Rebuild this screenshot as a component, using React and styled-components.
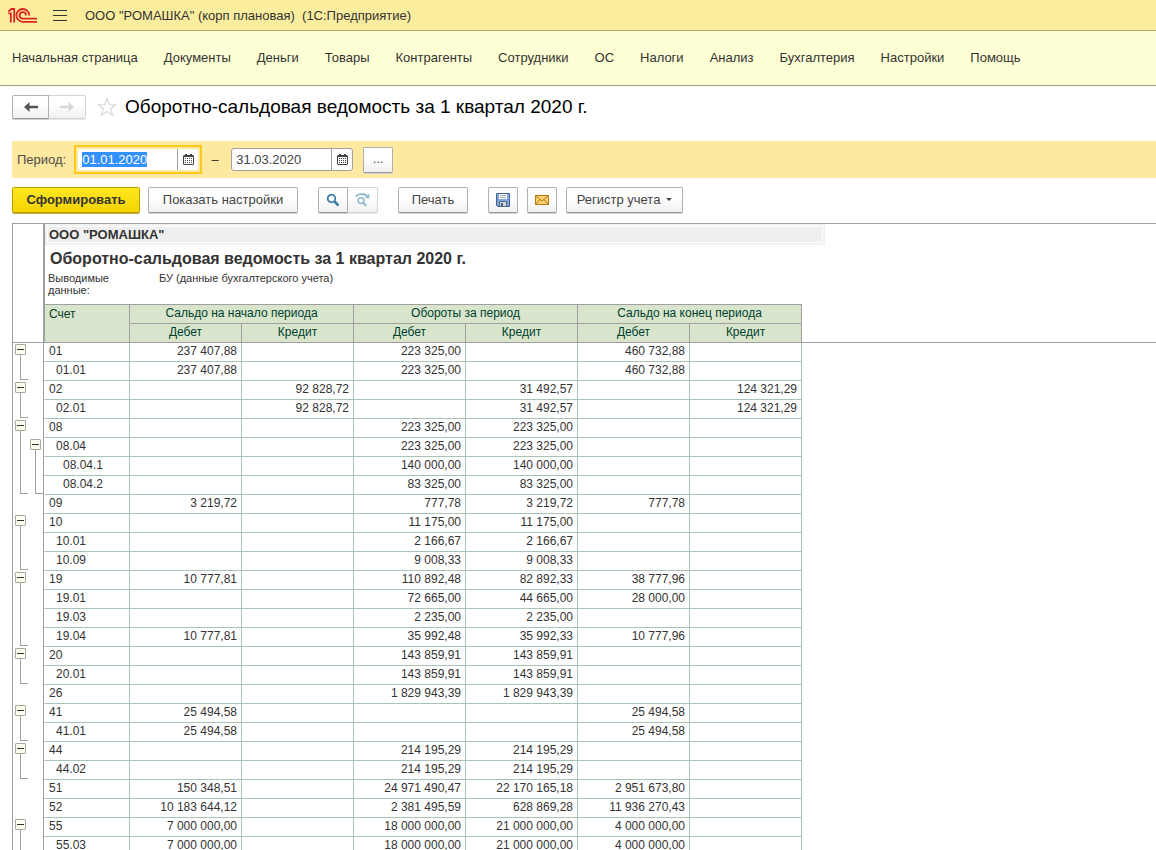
import React, { useEffect, useRef, useState } from 'react';
import styled, { createGlobalStyle, css } from 'styled-components';

const GlobalStyle = createGlobalStyle`
  * {
    box-sizing: border-box;
  }

  body {
    margin: 0;
    background: #ffffff;
    color: #333333;
    font-family: 'Liberation Sans', Arial, sans-serif;
    font-size: 13px;
  }

  button,
  input {
    font: inherit;
    color: inherit;
  }

  svg {
    flex: none;
  }
`;

const Page = styled.div`
  display: flex;
  flex-direction: column;
  height: 100vh;
  overflow: hidden;
`;

const TitleBar = styled.header`
  display: flex;
  flex: none;
  align-items: center;
  height: 31px;
  padding-left: 8px;
  background: #fbed9e;
  border-bottom: 1px solid #b3a86b;
`;

const MenuButton = styled.button`
  display: flex;
  margin: 0 18px 0 16px;
  padding: 0;
  border: none;
  background: none;
`;

const NavBar = styled.nav`
  display: flex;
  flex: none;
  align-items: center;
  gap: 26px;
  height: 55px;
  padding: 0 0 2px 12px;
  background: #ffffd5;
  border-bottom: 1px solid #a0a080;
`;

const NavLink = styled.a`
  color: #333333;
  text-decoration: none;
  white-space: nowrap;
`;

const FormHeader = styled.div`
  display: flex;
  flex: none;
  align-items: center;
  height: 42px;
  padding-left: 12px;
`;

const FormTitle = styled.h1`
  margin: 0 0 0 8px;
  color: #000000;
  font-size: 19px;
  font-weight: normal;
`;

const Button = styled.button`
  display: flex;
  align-items: center;
  justify-content: center;
  gap: 6px;
  width: ${props => props.$width || 30}px;
  height: 26px;
  padding: 0 0 2px;
  border: 1px solid #b0b0b0;
  border-bottom-color: #9a9a9a;
  border-radius: 2px;
  background: linear-gradient(#ffffff 40%, #f0f0f0);
  box-shadow: 0 1px 0 #d0d0d0;
  color: #444444;
  white-space: nowrap;

  ${props => props.$primary && css`
    border-color: #b8a000;
    background: linear-gradient(#ffe720, #f5d400);
    box-shadow: 0 1px 0 #c0b050;
    color: #333333;
    font-weight: bold;
  `}

  ${props => props.$icon && css`
    padding: 0;
  `}
`;

const ButtonPair = styled.div`
  display: flex;

  button:first-child {
    border-radius: 2px 0 0 2px;
  }

  button:last-child {
    border-left: none;
    border-color: #d4d4d4;
    border-radius: 0 2px 2px 0;
    box-shadow: 0 1px 0 #e4e4e4;
  }
`;

const HistoryButtons = styled(ButtonPair)`
  margin-right: 11px;

  button {
    height: 24px;
  }
`;

const StarButton = styled.button`
  display: flex;
  padding: 0;
  border: none;
  background: none;
`;

const PeriodBar = styled.div`
  display: flex;
  flex: none;
  align-items: center;
  height: 37px;
  margin: 13px 0 9px 12px;
  padding-left: 5px;
  background: #fde9a0;
`;

const PeriodLabel = styled.label`
  margin-right: 8px;
  color: #4d4d4d;
`;

const FocusFrame = styled.div`
  padding: 1px;
  border: 2px solid ${props => (props.$active ? '#fcc81c' : 'transparent')};
`;

const DateBox = styled.div`
  display: flex;
  width: 122px;
  height: 23px;
  border: 1px solid ${props => (props.$active ? '#fde9a0' : '#a0a0a0')};
  border-radius: 3px;
  background: #ffffff;
`;

const DateInput = styled.input`
  flex: 1;
  min-width: 0;
  padding: 0 0 0 4px;
  border: none;
  outline: none;
  background: transparent;
  color: #444444;

  &::selection {
    background: #3390ff;
    color: #ffffff;
  }
`;

const CalendarButton = styled.button`
  display: flex;
  align-items: center;
  justify-content: center;
  width: 21px;
  padding: 0;
  border: none;
  border-left: 1px solid #a0a0a0;
  background: none;
`;

const Dash = styled.span`
  width: 26px;
  text-align: center;
`;

const PeriodChoice = styled.div`
  margin-left: 7px;
`;

const Toolbar = styled.div`
  display: flex;
  flex: none;
  gap: 20px;
  height: 36px;
  padding-left: 12px;
`;

const ToolGroup = styled.div`
  display: flex;
  gap: ${props => props.$gap || 8}px;
`;

const Report = styled.section`
  flex: 1;
  min-height: 0;
  margin-left: 12px;
  border-top: 1px solid #a0a0a0;
  border-left: 1px solid #a0a0a0;
  overflow: auto;
  scrollbar-width: none;
`;

const ReportHead = styled.div`
  display: flex;
  height: 80px;
`;

const HeadGutter = styled.div`
  flex: none;
  width: 32px;
  border-right: 2px solid #a0a0a0;
`;

const HeadContent = styled.div`
  flex: 1;
`;

const Company = styled.div`
  width: 780px;
  height: 21px;
  border: 2px solid #f2f2f2;
  border-left: none;
  outline: 1px solid #ffffff;
  outline-offset: -3px;
  background: #efefef;
  padding-left: 4px;
  font-weight: bold;
  line-height: 17px;
`;

const ReportTitle = styled.h2`
  height: 27px;
  margin: 0;
  padding-left: 5px;
  font-size: 16px;
  line-height: 28px;
`;

const OutputData = styled.div`
  display: flex;
  padding-left: 3px;
  font-size: 11px;
  line-height: 12px;

  span:first-child {
    width: 111px;
    padding-right: 30px;
  }
`;

const Table = styled.table`
  width: 100%;
  table-layout: fixed;
  border-collapse: separate;
  border-spacing: 0;
  font-size: 12px;
`;

const HeadCell = styled.th`
  height: 19px;
  padding: 0 0 2px;
  border-right: 1px solid #a0a0a0;
  border-bottom: 1px solid #a0a0a0;
  background: #d8e5cc;
  color: #003f2f;
  font-weight: normal;
  line-height: 16px;

  ${props => props.$top && css`
    height: 20px;
    border-top: 1px solid #a0a0a0;
  `}

  ${props => props.$account && css`
    padding: 1px 0 0 4px;
    border-left: 1px solid #a0a0a0;
    text-align: left;
    vertical-align: top;
  `}
`;

const BlankHead = styled.td`
  padding: 0;
  border-bottom: 1px solid #a0a0a0;
  border-right: ${props => (props.$gutter ? '1px solid #a0a0a0' : 'none')};
`;

const GutterCell = styled.td`
  height: 19px;
  padding: 0;
  border-right: 1px solid #a0a0a0;
`;

const Slots = styled.div`
  display: flex;
  height: 19px;
`;

const Slot = styled.div`
  display: flex;
  flex-direction: column;
  width: 15px;
  height: 19px;
  padding: 1px 0 0 2px;

  ${props => props.$kind === 'line' && css`
    padding: 0 0 0 7px;
  `}
`;

const Toggle = styled.button`
  display: flex;
  align-items: center;
  justify-content: center;
  flex: none;
  width: 11px;
  height: 11px;
  padding: 0;
  border: 1px solid #a8a8a0;
  border-radius: 1px;
  background: #fffff0;

  &::before {
    content: '';
    width: 7px;
    height: 1px;
    background: #333333;
  }

  &[aria-expanded='false']::after {
    content: '';
    width: 1px;
    height: 7px;
    margin-left: -4px;
    background: #333333;
  }
`;

const Branch = styled.span`
  flex: 1;
  width: 8px;
  margin-left: ${props => (props.$below ? 5 : 0)}px;
  border-left: 1px solid #a0a0a0;

  ${props => props.$end && css`
    flex: none;
    height: 18px;
    border-bottom: 1px solid #a0a0a0;
  `}
`;

const AccountCell = styled.td`
  padding: 0 0 2px ${props => 4 + props.$level * 7}px;
  border-left: 1px solid #ffffff;
  border-right: 1px solid #a8c4b8;
  border-bottom: 1px solid #a8c4b8;
  line-height: 16px;
`;

const SumCell = styled.td`
  padding: 0 4px 2px 0;
  border-right: 1px solid #a8c4b8;
  border-bottom: 1px solid #a8c4b8;
  line-height: 16px;
  text-align: right;
`;

const navItems = [
  'Начальная страница',
  'Документы',
  'Деньги',
  'Товары',
  'Контрагенты',
  'Сотрудники',
  'ОС',
  'Налоги',
  'Анализ',
  'Бухгалтерия',
  'Настройки',
  'Помощь',
];

const groups = ['Сальдо на начало периода', 'Обороты за период', 'Сальдо на конец периода'];

const accounts = [
  ['01', 0, '237 407,88', '', '223 325,00', '', '460 732,88', ''],
  ['01.01', 1, '237 407,88', '', '223 325,00', '', '460 732,88', ''],
  ['02', 0, '', '92 828,72', '', '31 492,57', '', '124 321,29'],
  ['02.01', 1, '', '92 828,72', '', '31 492,57', '', '124 321,29'],
  ['08', 0, '', '', '223 325,00', '223 325,00', '', ''],
  ['08.04', 1, '', '', '223 325,00', '223 325,00', '', ''],
  ['08.04.1', 2, '', '', '140 000,00', '140 000,00', '', ''],
  ['08.04.2', 2, '', '', '83 325,00', '83 325,00', '', ''],
  ['09', 0, '3 219,72', '', '777,78', '3 219,72', '777,78', ''],
  ['10', 0, '', '', '11 175,00', '11 175,00', '', ''],
  ['10.01', 1, '', '', '2 166,67', '2 166,67', '', ''],
  ['10.09', 1, '', '', '9 008,33', '9 008,33', '', ''],
  ['19', 0, '10 777,81', '', '110 892,48', '82 892,33', '38 777,96', ''],
  ['19.01', 1, '', '', '72 665,00', '44 665,00', '28 000,00', ''],
  ['19.03', 1, '', '', '2 235,00', '2 235,00', '', ''],
  ['19.04', 1, '10 777,81', '', '35 992,48', '35 992,33', '10 777,96', ''],
  ['20', 0, '', '', '143 859,91', '143 859,91', '', ''],
  ['20.01', 1, '', '', '143 859,91', '143 859,91', '', ''],
  ['26', 0, '', '', '1 829 943,39', '1 829 943,39', '', ''],
  ['41', 0, '25 494,58', '', '', '', '25 494,58', ''],
  ['41.01', 1, '25 494,58', '', '', '', '25 494,58', ''],
  ['44', 0, '', '', '214 195,29', '214 195,29', '', ''],
  ['44.02', 1, '', '', '214 195,29', '214 195,29', '', ''],
  ['51', 0, '150 348,51', '', '24 971 490,47', '22 170 165,18', '2 951 673,80', ''],
  ['52', 0, '10 183 644,12', '', '2 381 495,59', '628 869,28', '11 936 270,43', ''],
  ['55', 0, '7 000 000,00', '', '18 000 000,00', '21 000 000,00', '4 000 000,00', ''],
  ['55.03', 1, '7 000 000,00', '', '18 000 000,00', '21 000 000,00', '4 000 000,00', ''],
].map(([code, level, ...sums]) => ({ code, level, sums }));

const hasChildren = (code) => accounts.some(a => a.code.startsWith(code + '.'));

function Logo() {
  return (
    <svg width="29" height="15" viewBox="0 0 29 15" fill="none" stroke="#dc2420" strokeWidth="1.8">
      <path d="M0.3 3.6 L3.2 1 H6.2 V14.6" />
      <path d="M0.3 5.4 H2.8 V14.6" />
      <path d="M21.2 7.4 A6.4 6.4 0 1 0 14.8 13.8 H29" />
      <path d="M18 7.4 A3.2 3.2 0 1 0 14.8 10.6 H29" />
    </svg>
  );
}

function CalendarIcon() {
  return (
    <svg width="11" height="11" viewBox="0 0 11 11" fill="#444444">
      <path d="M1 1h1V0h2v1h3V0h2v1h1l1 1v8l-1 1H1l-1-1V2zM1 3v7h9V3z" fillRule="evenodd" />
      {[4, 6, 8].map(y => (
        <path key={y} d={`M2 ${y}h1v1h-1zM4 ${y}h1v1h-1zM6 ${y}h1v1h-1zM8 ${y}h1v1h-1z`} />
      ))}
    </svg>
  );
}

function ArrowIcon({ color, right }) {
  return (
    <svg width="14" height="10" viewBox="0 0 14 10" fill={color}>
      {right
        ? <path d="M14 5 L8.5 0 V3.7 H0 V6.3 H8.5 V10 Z" />
        : <path d="M0 5 L5.5 0 V3.7 H14 V6.3 H5.5 V10 Z" />}
    </svg>
  );
}

function SearchIcon() {
  return (
    <svg width="14" height="14" viewBox="0 0 14 14" fill="none" stroke="#3a7ca8">
      <circle cx="5.5" cy="5.5" r="3.8" strokeWidth="1.8" />
      <path d="M8.5 8.5 L12.5 12.5" strokeWidth="2.6" />
    </svg>
  );
}

function SearchNextIcon() {
  return (
    <svg width="15" height="14" viewBox="0 0 15 14" fill="none" stroke="#94b9cf">
      <circle cx="6" cy="7.6" r="2.9" strokeWidth="1.6" />
      <path d="M8.2 9.8 L11.2 12.8" strokeWidth="2.2" />
      <path d="M0.8 3.6 C3 0.4 9 0.4 12.2 3" strokeWidth="2" />
      <path d="M14.4 0.4 V5.2 H9.6 Z" fill="#94b9cf" stroke="none" />
    </svg>
  );
}

function SaveIcon() {
  return (
    <svg width="14" height="14" viewBox="0 0 14 14">
      <path d="M0.5 0.5h13v13h-12l-1-1z" fill="#7fa6d6" stroke="#3f6492" />
      <path d="M3 1h8v5H3z" fill="#ffffff" />
      <path d="M4 2.5h6M4 4.5h6" stroke="#a0a8b0" />
      <path d="M3.5 8.5h7v5h-7z" fill="#d8dce0" stroke="#4a6484" />
      <path d="M5 10h2v3H5z" fill="#3f5a7c" />
    </svg>
  );
}

function MailIcon() {
  return (
    <svg width="14" height="10" viewBox="0 0 14 10" fill="none" stroke="#b87818">
      <rect x="0.5" y="0.5" width="13" height="9" fill="#fbd070" />
      <path d="M1 1 L7 6 L13 1 M1 9 L5 4.6 M13 9 L9 4.6" />
    </svg>
  );
}

function StarIcon() {
  return (
    <svg width="20" height="20" viewBox="0 0 20 20" fill="#ffffff" stroke="#d8d8d8" strokeWidth="1.2">
      <path d="M10 1.5 L12.3 7.6 L18.8 7.8 L13.7 11.8 L15.6 18.2 L10 14.4 L4.4 18.2 L6.3 11.8 L1.2 7.8 L7.7 7.6 Z" />
    </svg>
  );
}

function DateField({ id, label, initial, focused }) {
  const [value, setValue] = useState(initial);
  const ref = useRef(null);

  useEffect(() => {
    if (focused) {
      ref.current.focus();
      ref.current.select();
    }
  }, [focused]);

  return (
    <FocusFrame $active={focused}>
      <DateBox $active={focused}>
        <DateInput
          ref={ref}
          id={id}
          aria-label={label}
          value={value}
          onChange={(e) => setValue(e.target.value)}
        />
        <CalendarButton aria-label="Выбрать дату"><CalendarIcon /></CalendarButton>
      </DateBox>
    </FocusFrame>
  );
}

function TreeSlot({ row, next, depth, collapsed, onToggle }) {
  if (row.level === depth && hasChildren(row.code)) {
    return (
      <Slot>
        <Toggle
          aria-label={`Счет ${row.code}`}
          aria-expanded={!collapsed}
          onClick={() => onToggle(row.code)}
        />
        {!collapsed && <Branch $below />}
      </Slot>
    );
  }
  if (row.level > depth) {
    return (
      <Slot $kind="line">
        <Branch $end={!next || next.level <= depth} />
      </Slot>
    );
  }
  return <Slot />;
}

function ReportTable() {
  const [closed, setClosed] = useState([]);

  const toggle = (code) => {
    setClosed(closed.includes(code) ? closed.filter(c => c !== code) : [...closed, code]);
  };

  const rows = accounts.filter(a => !closed.some(c => a.code.startsWith(c + '.')));

  return (
    <Table>
      <colgroup>
        <col width="31" />
        <col width="86" />
        {[1, 2, 3, 4, 5, 6].map(n => <col key={n} width="112" />)}
        <col />
      </colgroup>
      <thead>
        <tr>
          <BlankHead $gutter rowSpan={2} />
          <HeadCell $top $account rowSpan={2}>Счет</HeadCell>
          {groups.map(name => <HeadCell $top key={name} colSpan={2}>{name}</HeadCell>)}
          <BlankHead rowSpan={2} />
        </tr>
        <tr>
          {groups.map(name => (
            <React.Fragment key={name}>
              <HeadCell>Дебет</HeadCell>
              <HeadCell>Кредит</HeadCell>
            </React.Fragment>
          ))}
        </tr>
      </thead>
      <tbody>
        {rows.map((row, i) => (
          <tr key={row.code}>
            <GutterCell>
              <Slots>
                {[0, 1].map(depth => (
                  <TreeSlot
                    key={depth}
                    row={row}
                    next={rows[i + 1]}
                    depth={depth}
                    collapsed={closed.includes(row.code)}
                    onToggle={toggle}
                  />
                ))}
              </Slots>
            </GutterCell>
            <AccountCell $level={row.level}>{row.code}</AccountCell>
            {row.sums.map((sum, n) => <SumCell key={n}>{sum}</SumCell>)}
            <td />
          </tr>
        ))}
      </tbody>
    </Table>
  );
}

function App() {
  return (
    <Page>
      <GlobalStyle />
      <TitleBar>
        <Logo />
        <MenuButton aria-label="Главное меню">
          <svg width="14" height="11" viewBox="0 0 14 11" stroke="#333333">
            <path d="M0 0.5h14M0 5.5h14M0 10.5h14" />
          </svg>
        </MenuButton>
        <span>ООО "РОМАШКА" (корп плановая)&nbsp; (1С:Предприятие)</span>
      </TitleBar>
      <NavBar>
        {navItems.map(item => <NavLink key={item} href="#">{item}</NavLink>)}
      </NavBar>
      <FormHeader>
        <HistoryButtons>
          <Button $icon $width={37} aria-label="Назад"><ArrowIcon color="#555555" /></Button>
          <Button $icon $width={37} aria-label="Вперед"><ArrowIcon color="#d8d8d8" right /></Button>
        </HistoryButtons>
        <StarButton aria-label="Добавить в избранное"><StarIcon /></StarButton>
        <FormTitle>Оборотно-сальдовая ведомость за 1 квартал 2020 г.</FormTitle>
      </FormHeader>
      <PeriodBar>
        <PeriodLabel htmlFor="from">Период:</PeriodLabel>
        <DateField id="from" label="Начало периода" initial="01.01.2020" focused />
        <Dash>–</Dash>
        <DateField id="to" label="Конец периода" initial="31.03.2020" />
        <PeriodChoice>
          <Button aria-label="Выбрать период">...</Button>
        </PeriodChoice>
      </PeriodBar>
      <Toolbar>
        <ToolGroup>
          <Button $primary $width={128}>Сформировать</Button>
          <Button $width={150}>Показать настройки</Button>
        </ToolGroup>
        <ButtonPair>
          <Button $icon aria-label="Найти"><SearchIcon /></Button>
          <Button $icon aria-label="Найти далее"><SearchNextIcon /></Button>
        </ButtonPair>
        <ToolGroup>
          <Button $width={70}>Печать</Button>
        </ToolGroup>
        <ToolGroup $gap={9}>
          <Button $icon aria-label="Сохранить"><SaveIcon /></Button>
          <Button $icon aria-label="Отправить"><MailIcon /></Button>
          <Button $width={117}>
            Регистр учета
            <svg width="6" height="3" viewBox="0 0 6 3" fill="#444444"><path d="M0 0h6L3 3z" /></svg>
          </Button>
        </ToolGroup>
      </Toolbar>
      <Report>
        <ReportHead>
          <HeadGutter />
          <HeadContent>
            <Company>ООО "РОМАШКА"</Company>
            <ReportTitle>Оборотно-сальдовая ведомость за 1 квартал 2020 г.</ReportTitle>
            <OutputData>
              <span>Выводимые данные:</span>
              <span>БУ (данные бухгалтерского учета)</span>
            </OutputData>
          </HeadContent>
        </ReportHead>
        <ReportTable />
      </Report>
    </Page>
  );
}

export default App;
